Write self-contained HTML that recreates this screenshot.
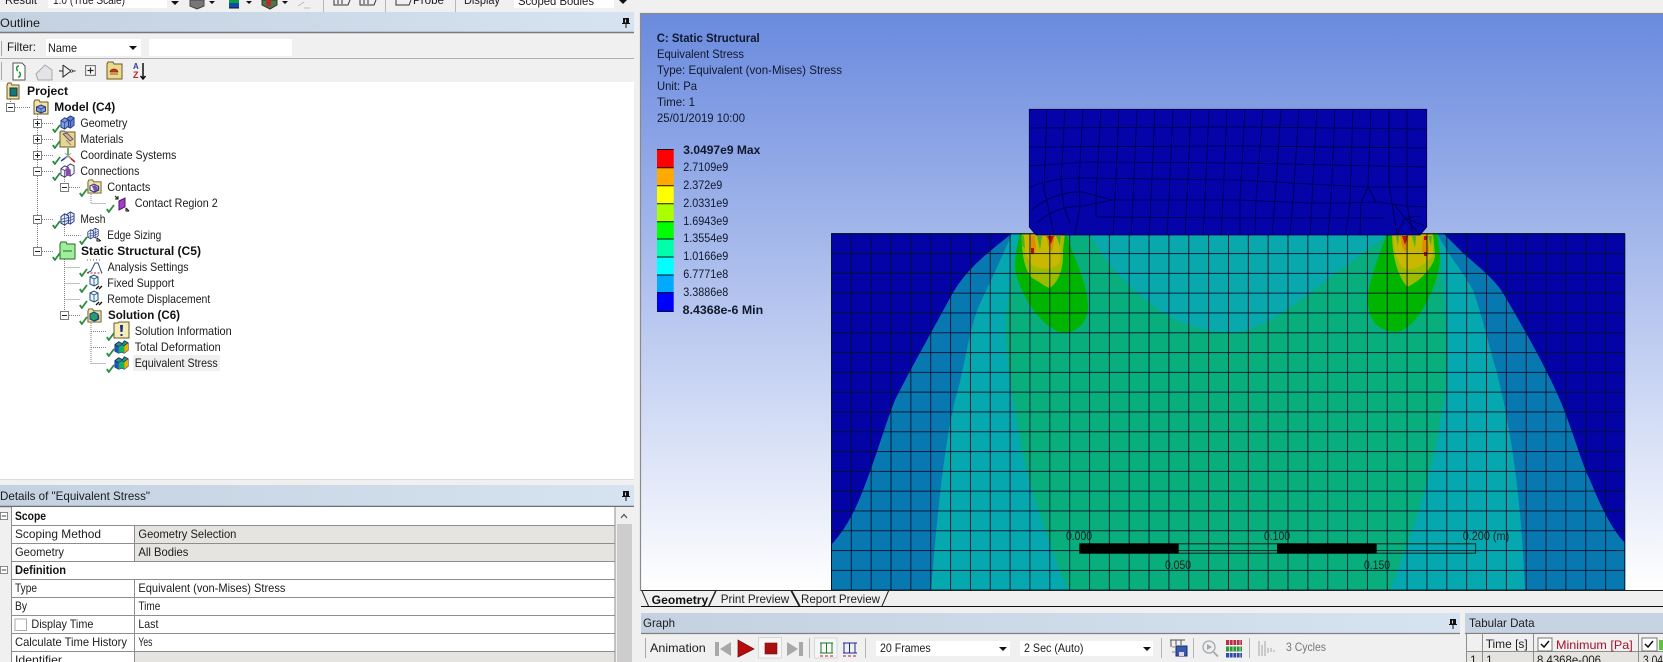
<!DOCTYPE html>
<html lang="en"><head><meta charset="utf-8"><title>Static Structural</title>
<style>
html,body{margin:0;padding:0;width:1663px;height:662px;overflow:hidden;background:#f0f0f0}
svg{display:block}
text{font-family:"Liberation Sans",sans-serif;font-size:12px;fill:#1c1c1c}
.b{font-weight:bold;fill:#111}
.v text,text.v{fill:#10182c}
</style></head><body>
<svg xmlns="http://www.w3.org/2000/svg" width="1663" height="662" viewBox="0 0 1663 662">
<defs>
<linearGradient id="hd" x1="0" x2="1" y1="0" y2="0"><stop offset="0" stop-color="#c3d1e1"/><stop offset="1" stop-color="#d6e3f0"/></linearGradient>
<linearGradient id="bg" x1="0" x2="0" y1="0" y2="1"><stop offset="0" stop-color="#6a8ade"/><stop offset="1" stop-color="#ffffff"/></linearGradient>
<clipPath id="low"><rect x="831" y="233.3" width="794" height="356.7"/></clipPath>
<pattern id="grid" patternUnits="userSpaceOnUse" x="831" y="233.3" width="19.85" height="19.8"><path d="M.4 0V19.8M0 .4H19.85" stroke="#03102c" stroke-width=".95" fill="none"/></pattern>
<symbol id="cube" viewBox="0 0 16 16"><path d="M1 6l4-3 4 2v7l-4 3-4-2z" fill="#7f9fe4" stroke="#27397e"/><path d="M7 4l4-3 4 2v8l-4 3-2-1V5z" fill="#5f82d8" stroke="#27397e"/><path d="M1 6l4 2 4-3M5 8v7M9 5l2 2 4-4M11 7v7" fill="none" stroke="#27397e" stroke-width=".8"/></symbol>
<symbol id="wire" viewBox="0 0 16 16"><path d="M1 6l4-3 4 2v7l-4 3-4-2z" fill="#f6f6fb" stroke="#3a3a6a"/><path d="M7 4l4-3 4 2v8l-4 3-2-1V5z" fill="#f6f6fb" stroke="#3a3a6a"/><path d="M1 6l4 2 4-3M5 8v7M11 7v7" fill="none" stroke="#3a3a6a" stroke-width=".8"/><path d="M6 6l3-1 2 2v5l-3 2-2-1z" fill="#8a48a8"/></symbol>
<symbol id="mesh" viewBox="0 0 16 16"><path d="M1 6l4-3 4 2v7l-4 3-4-2z" fill="#e4ecf8" stroke="#27397e"/><path d="M7 4l4-3 4 2v8l-4 3-2-1V5z" fill="#e4ecf8" stroke="#27397e"/><path d="M1 9l8-2M1 12l8-2M9 8l6-3M9 11l6-3M5 3v12M11 1v13" fill="none" stroke="#27397e" stroke-width=".7"/></symbol>
<symbol id="folder" viewBox="0 0 16 16"><path d="M1 3l1-2h4l1 2h8v12H1z" fill="#f2e3a2" stroke="#6a5a28"/><path d="M3.500 8l4.500-2 4.500 2v4l-4.500 2-4.500-2z" fill="#7f9fe0" stroke="#27397e"/><path d="M3.500 8l4.500 2 4.500-2M8 10v4" fill="none" stroke="#27397e" stroke-width=".7"/></symbol>
<symbol id="res" viewBox="0 0 16 16"><path d="M1 6l4-3 4 2 2-3 4 2v8l-4 3-3-1-3 1-4-2z" fill="#20a070" stroke="#1c2a70"/><path d="M1 6l4 2v7l-4-2z" fill="#2050c8"/><path d="M11 7l4-3v8l-4 3z" fill="#e8b000"/><path d="M5 8l3-2 3 1v8l-3-1-3 1z" fill="#18b060"/><path d="M1 6l4 2 3-2 3 1 4-3" fill="none" stroke="#1c2a70" stroke-width=".8"/></symbol>
<symbol id="supp" viewBox="0 0 16 16"><path d="M3 3l4-2 4 2v7l-4 2-4-2z" fill="#eef4fa" stroke="#16507e"/><path d="M3 3l4 2 4-2M7 5v7" fill="none" stroke="#16507e" stroke-width=".8"/><path d="M9 15l3-3M12 15l3-3" stroke="#111" stroke-width="1.400"/></symbol>
<symbol id="chk" viewBox="0 0 9 9"><path d="M.8 5l2 3L8 1" fill="none" stroke="#2a8c40" stroke-width="1.800"/></symbol>
<symbol id="plus" viewBox="0 0 9 9"><rect x=".5" y=".5" width="8" height="8" fill="#fff" stroke="#7d7d7d"/><path d="M2 4.500h5M4.500 2v5" stroke="#222"/></symbol>
<symbol id="minus" viewBox="0 0 9 9"><rect x=".5" y=".5" width="8" height="8" fill="#fff" stroke="#7d7d7d"/><path d="M2 4.500h5" stroke="#222"/></symbol>
<symbol id="pin" viewBox="0 0 8 10"><path d="M1.500.5h5v5h-5zM0 5.500h8M4 5.500V10" fill="#111" stroke="#111"/><path d="M3 1.500h1v3H3z" fill="#ddd"/></symbol>
</defs>

<!-- top toolbar -->
<rect width="1663" height="13" fill="#f0f0f0"/>
<rect x="48" y="0" width="119" height="8" fill="#fff"/>
<text x="5" y="4" textLength="32" lengthAdjust="spacingAndGlyphs">Result</text>
<text x="53" y="4" textLength="72" lengthAdjust="spacingAndGlyphs">1.0 (True Scale)</text>
<path d="M171 1h8l-4 4zM209 1h6l-3 3zM246 1h6l-3 3zM282 1h6l-3 3zM619 0h8l-4 4z" fill="#111"/>
<path d="M190 0h14v6l-7 3-7-3z" fill="#777" stroke="#444"/>
<rect x="229" y="0" width="10" height="3" fill="#0aa040"/><rect x="229" y="3" width="10" height="5" fill="#104ab0"/><path d="M229 8h10" stroke="#111"/>
<path d="M262 0h15v5l-7 4-8-4z" fill="#4a7a40" stroke="#333"/><path d="M266 0h5v6h-5z" fill="#b03030"/>
<path d="M298 6l6-4M304 8h6" stroke="#bbb" fill="none"/>
<path d="M323.500 0v12M385.500 0v12M455.500 0v12" stroke="#b8b8b8"/>
<path d="M334 0v5h14l2-5M360 0v5h14l2-5M396 0v5h13l2-5M338 0v4M342 0v4M364 0v4M368 0v4" stroke="#333" fill="none"/>
<text x="413" y="4" textLength="31" lengthAdjust="spacingAndGlyphs">Probe</text>
<text x="464" y="4" textLength="36" lengthAdjust="spacingAndGlyphs">Display</text>
<rect x="514" y="0" width="100" height="8" fill="#fff"/>
<text x="518" y="5" textLength="76" lengthAdjust="spacingAndGlyphs">Scoped Bodies</text>

<!-- Outline panel -->
<rect x="0" y="12" width="634" height="20.500" fill="url(#hd)"/>
<path d="M0 32.500h634" stroke="#787878" stroke-width="1.400"/>
<text x="0" y="27" textLength="40" lengthAdjust="spacingAndGlyphs">Outline</text>
<use href="#pin" x="622" y="18" width="8" height="10"/>
<rect x="46" y="39" width="95" height="17" fill="#fff"/><rect x="149" y="39" width="143" height="17" fill="#fff"/>
<text x="7" y="51" textLength="29" lengthAdjust="spacingAndGlyphs">Filter:</text>
<text x="48" y="52" textLength="29" lengthAdjust="spacingAndGlyphs">Name</text>
<path d="M129 46h8l-4 4z" fill="#111"/>
<path d="M0 58.500h634" stroke="#b0b0b0"/>
<path d="M1.500 41v15M1.500 62v18" stroke="#a8a8a8"/>
<path d="M13 63h9l3 3v14H13z" fill="#fff" stroke="#555"/><path d="M19 66c-3 0-3 4-1 5M18 77c3 0 3-4 1-5" fill="none" stroke="#199a33" stroke-width="1.500"/>
<path d="M36 74l9-9 7 5v10H38z" fill="#e4e4e8" stroke="#a8a8a8"/>
<path d="M59 71h4M63 65v12l8-6-8-6M72.500 71h3" fill="none" stroke="#222"/><circle cx="71.500" cy="71" r="1.200" fill="#fff" stroke="#222" stroke-width=".7"/>
<use href="#plus" x="85" y="65" width="11" height="11"/>
<path d="M107 64l1-2h5l1 2h8v15h-15z" fill="#edd98c" stroke="#6a5a28"/><path d="M110 72a4 3 0 0 1 8 0zM110 74h8" fill="#c03a20" stroke="#7a2c14" stroke-width=".7"/>
<text x="133" y="69" style="font-size:8px;font-weight:bold;fill:#3b3ba0">A</text><text x="133" y="78" style="font-size:9px;font-weight:bold;fill:#c02020">Z</text>
<path d="M143 63v16M140.500 76l2.500 3 2.500-3" fill="none" stroke="#111" stroke-width="1.500"/>
<rect x="0" y="82" width="634" height="397" fill="#fff"/>
<path d="M0 479.500h634" stroke="#dcdcdc"/>

<!-- tree connectors -->
<g fill="none" stroke="#808080" stroke-dasharray="1 1">
<path d="M10.500 97v5M15 107.500h16M37.500 112v143M42 123.500h11M42 139.500h11M42 155.500h11M42 171.500h11M42 219.500h11M42 251.500h11M64.500 177v7M69 187.500h11M64.500 225v10.500h16M64.500 257v58M64.500 267.500h15M64.500 283.500h15M64.500 299.500h15M69 315.500h11M91 192v11.500h15M91 321v42.500h15M91 331.500h15M91 347.500h15"/>
</g>
<use href="#minus" x="6" y="103" width="9" height="9"/>
<use href="#plus" x="33" y="119" width="9" height="9"/><use href="#plus" x="33" y="135" width="9" height="9"/><use href="#plus" x="33" y="151" width="9" height="9"/>
<use href="#minus" x="33" y="167" width="9" height="9"/><use href="#minus" x="33" y="215" width="9" height="9"/><use href="#minus" x="33" y="247" width="9" height="9"/>
<use href="#minus" x="60" y="183" width="9" height="9"/><use href="#minus" x="60" y="311" width="9" height="9"/>

<!-- tree icons -->
<path d="M7 85l1-2h3l1 2h7v14H7z" fill="#f2e3a2" stroke="#6a5a28"/><rect x="10" y="88" width="7" height="8" fill="#167a6e" stroke="#12304a"/>
<use href="#folder" x="33" y="99" width="16" height="16"/>
<use href="#cube" x="60" y="115" width="15" height="15"/>
<path d="M60 132l1-1h3l1 1h10v15H60z" fill="#e8d694" stroke="#6a5a28"/><path d="M63 134l7 7 3-2-6-6z" fill="#c8b4a8" stroke="#6c5a58"/><path d="M66 140l5 5" stroke="#888"/>
<path d="M68 148v8" stroke="#2a9a30" stroke-width="1.500"/><path d="M68 156l-7 5" stroke="#2a3ab0" stroke-width="1.500"/><path d="M68 156l7 6" stroke="#c02020" stroke-width="1.500"/><path d="M65 153l6 6M71 153l-6 6" stroke="#aaa"/>
<use href="#wire" x="60" y="163" width="15" height="15"/>
<use href="#folder" x="87" y="179" width="15" height="15"/><path d="M90 186l4-2 4 2v4l-4 2-4-2z" fill="#f4f4fa" stroke="#27397e"/><path d="M92 186l3-1 2 2v3l-3 1z" fill="#8a48a8"/>
<path d="M119 201l6-3v9l-6 3z" fill="#a63ad0" stroke="#4a1a60"/><path d="M115 196l3 3M118 196v3h-3M126 208l3 3M126 208v3h3" stroke="#111" fill="none"/>
<use href="#mesh" x="60" y="211" width="15" height="15"/>
<use href="#mesh" x="87" y="227" width="12" height="13"/><path d="M97 238l4 3M97 238v3h3" stroke="#111" fill="none"/>
<path d="M60 244l1-2h5l1 2h8v15H60z" fill="#9fee9a" stroke="#2a6a2a"/><path d="M63 251h9" stroke="#2a6a2a"/>
<path d="M87 273l4-2 4-8 3 0 3 8 1 2" fill="none" stroke="#2a4a8a"/><path d="M87 260h15" stroke="#666" stroke-dasharray="1 2"/><path d="M87 273h15" stroke="#c02020" stroke-dasharray="2 1.500"/>
<use href="#supp" x="87" y="274" width="16" height="16"/><use href="#supp" x="87" y="290" width="16" height="16"/>
<use href="#folder" x="87" y="308" width="15" height="15"/><path d="M90 314l4-2 4 2v5l-4 2-4-2z" fill="#20a070" stroke="#27397e"/>
<path d="M114 323h4l1-1h10v16h-15z" fill="#f6eeb4" stroke="#6a5a28"/><path d="M120 325h3l-.5 7h-2zM120.500 334h2v2h-2z" fill="#1a2a90"/>
<use href="#res" x="114" y="339" width="15" height="15"/><use href="#res" x="114" y="355" width="15" height="15"/>
<!-- checks -->
<g>
<use href="#chk" x="52" y="124" width="9" height="9"/><use href="#chk" x="52" y="140" width="9" height="9"/><use href="#chk" x="52" y="156" width="9" height="9"/><use href="#chk" x="52" y="172" width="9" height="9"/>
<use href="#chk" x="79" y="188" width="9" height="9"/><use href="#chk" x="106" y="204" width="9" height="9"/>
<use href="#chk" x="52" y="220" width="9" height="9"/><use href="#chk" x="79" y="236" width="9" height="9"/><use href="#chk" x="52" y="252" width="9" height="9"/>
<use href="#chk" x="79" y="268" width="9" height="9"/><use href="#chk" x="79" y="284" width="9" height="9"/><use href="#chk" x="79" y="300" width="9" height="9"/><use href="#chk" x="79" y="316" width="9" height="9"/>
<use href="#chk" x="106" y="332" width="9" height="9"/><use href="#chk" x="106" y="348" width="9" height="9"/><use href="#chk" x="106" y="364" width="9" height="9"/>
</g>
<rect x="133" y="355" width="87" height="16" fill="#f0f0f0"/>
<!-- tree text -->
<text class="b" x="27" y="95" textLength="41" lengthAdjust="spacingAndGlyphs">Project</text>
<text class="b" x="54.300" y="111" textLength="61" lengthAdjust="spacingAndGlyphs">Model (C4)</text>
<text x="80.400" y="127" textLength="47" lengthAdjust="spacingAndGlyphs">Geometry</text>
<text x="80.400" y="143" textLength="43" lengthAdjust="spacingAndGlyphs">Materials</text>
<text x="80.400" y="159" textLength="96" lengthAdjust="spacingAndGlyphs">Coordinate Systems</text>
<text x="80.400" y="175" textLength="59" lengthAdjust="spacingAndGlyphs">Connections</text>
<text x="107.300" y="191" textLength="43" lengthAdjust="spacingAndGlyphs">Contacts</text>
<text x="134.700" y="207" textLength="83" lengthAdjust="spacingAndGlyphs">Contact Region 2</text>
<text x="80.400" y="223" textLength="25" lengthAdjust="spacingAndGlyphs">Mesh</text>
<text x="107.300" y="239" textLength="54" lengthAdjust="spacingAndGlyphs">Edge Sizing</text>
<text class="b" x="81" y="255" textLength="120" lengthAdjust="spacingAndGlyphs">Static Structural (C5)</text>
<text x="107.600" y="271" textLength="81" lengthAdjust="spacingAndGlyphs">Analysis Settings</text>
<text x="107.300" y="287" textLength="67" lengthAdjust="spacingAndGlyphs">Fixed Support</text>
<text x="107.300" y="303" textLength="103" lengthAdjust="spacingAndGlyphs">Remote Displacement</text>
<text class="b" x="108" y="319" textLength="72" lengthAdjust="spacingAndGlyphs">Solution (C6)</text>
<text x="134.700" y="335" textLength="97" lengthAdjust="spacingAndGlyphs">Solution Information</text>
<text x="134.700" y="351" textLength="86" lengthAdjust="spacingAndGlyphs">Total Deformation</text>
<text x="134.700" y="367" textLength="83" lengthAdjust="spacingAndGlyphs">Equivalent Stress</text>

<!-- Details panel -->
<rect x="0" y="485" width="634" height="21" fill="url(#hd)"/>
<path d="M0 506.500h634" stroke="#6e6e6e" stroke-width="1.400"/>
<text x="0" y="500" textLength="150" lengthAdjust="spacingAndGlyphs">Details of &quot;Equivalent Stress&quot;</text>
<use href="#pin" x="622" y="491" width="8" height="10"/>
<rect x="11.500" y="507" width="603.500" height="155" fill="#fff"/>
<rect x="134" y="525.500" width="481" height="36" fill="#e6e4e0"/>
<rect x="134" y="651.500" width="481" height="11" fill="#e6e4e0"/>
<path d="M11.500 507v155M134.500 525v36M134.500 579v83M615 507v155M11.500 525.500h603.500M11.500 543.500h603.500M11.500 561.500h603.500M11.500 579.500h603.500M11.500 597.500h603.500M11.500 615.500h603.500M11.500 633.500h603.500M11.500 651.500h603.500" stroke="#8e8e8e" fill="none"/>
<use href="#minus" x="0" y="512" width="8" height="8"/><use href="#minus" x="0" y="566" width="8" height="8"/>
<rect x="615.500" y="507" width="18.500" height="155" fill="#f0f0f0"/><rect x="617" y="524" width="15" height="138" fill="#cdcdcd"/>
<path d="M621 518l3-3.500 3 3.500" fill="none" stroke="#555" stroke-width="1.300"/>
<rect x="15" y="619" width="11.500" height="11.500" fill="#fff" stroke="#ababab"/>
<text class="b" x="15" y="520" textLength="31" lengthAdjust="spacingAndGlyphs">Scope</text>
<text x="15" y="538" textLength="86" lengthAdjust="spacingAndGlyphs">Scoping Method</text>
<text x="138.400" y="538" textLength="98" lengthAdjust="spacingAndGlyphs">Geometry Selection</text>
<text x="15" y="556" textLength="49" lengthAdjust="spacingAndGlyphs">Geometry</text>
<text x="138.400" y="556" textLength="50" lengthAdjust="spacingAndGlyphs">All Bodies</text>
<text class="b" x="15" y="574" textLength="51" lengthAdjust="spacingAndGlyphs">Definition</text>
<text x="15" y="592" textLength="22" lengthAdjust="spacingAndGlyphs">Type</text>
<text x="138.400" y="592" textLength="147" lengthAdjust="spacingAndGlyphs">Equivalent (von-Mises) Stress</text>
<text x="15" y="610" textLength="12" lengthAdjust="spacingAndGlyphs">By</text>
<text x="138.400" y="610" textLength="22" lengthAdjust="spacingAndGlyphs">Time</text>
<text x="31.400" y="628" textLength="62" lengthAdjust="spacingAndGlyphs">Display Time</text>
<text x="138.400" y="628" textLength="20" lengthAdjust="spacingAndGlyphs">Last</text>
<text x="15" y="646" textLength="112" lengthAdjust="spacingAndGlyphs">Calculate Time History</text>
<text x="138.400" y="646" textLength="14" lengthAdjust="spacingAndGlyphs">Yes</text>
<text x="15" y="664" textLength="47" lengthAdjust="spacingAndGlyphs">Identifier</text>

<!-- Viewport -->
<rect x="641" y="14" width="1022" height="576.500" fill="url(#bg)"/>
<path d="M640.500 13v578M640 13.500h1023" stroke="#8a8a8a" stroke-width="1.200"/>
<g class="v">
<text class="b" x="656.700" y="42" textLength="103" lengthAdjust="spacingAndGlyphs">C: Static Structural</text>
<text x="657" y="58" textLength="87" lengthAdjust="spacingAndGlyphs">Equivalent Stress</text>
<text x="657" y="74" textLength="185" lengthAdjust="spacingAndGlyphs">Type: Equivalent (von-Mises) Stress</text>
<text x="657" y="90" textLength="40" lengthAdjust="spacingAndGlyphs">Unit: Pa</text>
<text x="657" y="106" textLength="38" lengthAdjust="spacingAndGlyphs">Time: 1</text>
<text x="657" y="122" textLength="88" lengthAdjust="spacingAndGlyphs">25/01/2019 10:00</text>
<text class="b" x="683.300" y="154" textLength="77" lengthAdjust="spacingAndGlyphs">3.0497e9 Max</text>
<text x="683.300" y="171" textLength="45" lengthAdjust="spacingAndGlyphs">2.7109e9</text>
<text x="683.300" y="189" textLength="39" lengthAdjust="spacingAndGlyphs">2.372e9</text>
<text x="683.300" y="207" textLength="45" lengthAdjust="spacingAndGlyphs">2.0331e9</text>
<text x="683.300" y="225" textLength="45" lengthAdjust="spacingAndGlyphs">1.6943e9</text>
<text x="683.300" y="242" textLength="45" lengthAdjust="spacingAndGlyphs">1.3554e9</text>
<text x="683.300" y="260" textLength="45" lengthAdjust="spacingAndGlyphs">1.0166e9</text>
<text x="683.300" y="278" textLength="45" lengthAdjust="spacingAndGlyphs">6.7771e8</text>
<text x="683.300" y="296" textLength="45" lengthAdjust="spacingAndGlyphs">3.3886e8</text>
<text class="b" x="682.700" y="314" textLength="80.500" lengthAdjust="spacingAndGlyphs">8.4368e-6 Min</text>
</g>
<!-- legend bar -->
<rect x="657" y="150" width="16.700" height="18" fill="#ff0000"/><rect x="657" y="168" width="16.700" height="18" fill="#ffaa00"/><rect x="657" y="186" width="16.700" height="18" fill="#ffff00"/><rect x="657" y="204" width="16.700" height="18" fill="#aaff00"/><rect x="657" y="222" width="16.700" height="17" fill="#00ff00"/><rect x="657" y="239" width="16.700" height="18" fill="#00ffaa"/><rect x="657" y="257" width="16.700" height="18" fill="#00ffff"/><rect x="657" y="275" width="16.700" height="17.500" fill="#00aaff"/><rect x="657" y="292.500" width="16.700" height="19.500" fill="#0000ff"/>
<path d="M657 149.500h16.700M657 167.700h16.700M657 185.700h16.700M657 203.700h16.700M657 221.700h16.700M657 239h16.700M657 257h16.700M657 275h16.700M657 292.500h16.700M657 311.500h16.700" stroke="#10101c" stroke-width="1"/>

<!-- lower block contours -->
<g clip-path="url(#low)">
<rect x="831" y="233" width="794" height="357" fill="#08ae7c"/>
<path d="M831 233H1020C1015 262 1005 300 1006 333C1007 370 1012 395 1017 420C1023 470 1045 535 1068 590H831Z" fill="#05a8ae"/>
<path d="M831 233H1012L1010 238C1003 255 990 282 978 308C968 335 965 365 957 393C948 425 940 480 931 590H831Z" fill="#0878b0"/>
<path d="M831 233H1012L1010 235C985 255 965 270 950 298C930 335 910 370 895 400C885 425 875 460 865 485C855 512 845 530 831 545Z" fill="#0303a6"/>
<path d="M1625 233H1438C1443 270 1447 320 1447 367C1447 390 1442 415 1440 423C1432 475 1410 540 1390 590H1625Z" fill="#05a8ae"/>
<path d="M1625 233H1437C1445 250 1465 275 1473 290C1482 315 1490 350 1497 373C1505 405 1520 470 1525 590H1625Z" fill="#0878b0"/>
<path d="M1625 233H1443L1463 253C1480 268 1495 280 1503 293C1520 322 1545 365 1560 400C1572 428 1582 465 1590 480C1600 505 1612 530 1625 543Z" fill="#0303a6"/>
<path d="M1090 233C1100 260 1140 300 1170 317C1195 330 1220 334 1240 332C1270 326 1300 300 1350 263L1390 233Z" fill="#08a8ac"/>
<!-- bright green blobs -->
<path d="M1020 233C1016 250 1012 265 1018 280C1025 300 1040 325 1060 332C1075 334 1088 325 1088 305C1087 280 1072 255 1066 233Z" fill="#00b400"/>
<path d="M1387 233C1380 255 1366 285 1368 305C1370 325 1385 334 1400 331C1420 325 1440 280 1440 257L1437 233Z" fill="#00b400"/>
<!-- yellow-green -->
<path d="M1022 233C1021 250 1024 270 1032 278C1040 282 1045 287 1050 288C1058 282 1064 270 1063 250L1065 233Z" fill="#9cbc00"/>
<path d="M1392 233C1392 250 1395 272 1407 287C1420 282 1435 265 1435 255L1433 233Z" fill="#9cbc00"/>
<!-- yellow -->
<path d="M1024 233C1024 245 1025 258 1032 265C1040 270 1052 270 1060 263L1062 233Z" fill="#c8b800"/>
<path d="M1393 233C1393 245 1395 260 1403 268C1412 272 1425 266 1433 255L1432 233Z" fill="#c8b800"/>
<!-- stripes -->
<path d="M1021 236l3 0 1 12-3-2zM1037 236h5l-2 14zM1056 236h5l-1 10z" fill="#52b020"/>
<path d="M1412 236h4l-1 12zM1428 236h4l-1 10zM1396 236h3l-1 10z" fill="#52b020"/>
<path d="M1029 236h6l1 12-3 8-3-8zM1046 236h9l-3 16-3-5z" fill="#e08c00"/>
<path d="M1400 236h9l-2 12-2 4-3-6zM1423 236h5l1 16-3 5-4-6z" fill="#e08c00"/>
<path d="M1031 248l3 0 0 5-3 1zM1047 236h7l-3 8zM1402 236h6l-3 9zM1424 236h3v4h-3zM1424 252h3v4h-3z" fill="#b81500"/>
<rect x="831" y="233.300" width="794" height="357" fill="url(#grid)"/>
</g>
<path d="M831.500 233.500v357M1624.800 233.500v357M831 233.800h203M1420 233.800h205M831 590.200h794" stroke="#03102c" fill="none"/>

<!-- upper block -->
<path d="M1029.300 109.300H1426.700V227L1420 235H1036L1029.300 227Z" fill="#0404a8" stroke="#00004e" stroke-width=".8"/>
<g fill="none" stroke="#00004c" stroke-width=".85">
<path d="M1047 109L1044 190M1065 109L1061 182M1083 109L1079 180M1101 109L1097 180 1096 197M1119 109L1115 200 1113 235M1137 109L1133 200 1131 235M1155 109L1151 200 1149 235M1173 109L1169 200 1167 235M1191 109L1187 200 1185 235M1209 109L1205 200 1203 235M1227 109L1223 200 1221 235M1245 109L1240 200 1240 235M1263 109L1256 200 1255 235M1281 109L1275 200 1272 235M1299 109L1293 200 1290 235M1317 109L1312 200 1310 235M1335 109L1331 200 1328 235M1353 109L1350 200 1346 235M1371 109L1368 187 1361 203 1360 235M1389 109L1389 185 1392 203 1397 235M1407 109L1407 205 1413 235"/>
<path d="M1029 128L1240 127 1427 129M1029 147L1240 146 1427 148M1029 166L1087 162 1240 163 1427 167M1029 188C1040 182 1060 178 1083 178L1240 180 1310 184 1368 187 1427 187M1032 210C1045 198 1065 191 1083 192L1112 200M1037 223C1048 212 1065 206 1083 206L1112 200M1112 200L1240 200 1307 203 1345 203 1376 202 1407 206 1427 207M1097 217L1240 218 1385 218"/>
<path d="M1044 190L1048 206 1054 235M1061 182L1064 207 1070 223M1079 180L1080 206 1075 235M1096 197L1096 216M1368 187L1376 202M1394 204L1405 218 1420 235M1427 227L1405 218 1397 235M1420 216L1405 218"/>
</g>

<!-- scale bar -->
<rect x="1079.300" y="543.300" width="99.400" height="10.400" fill="#000"/><rect x="1277" y="543.300" width="99.700" height="10.400" fill="#000"/>
<path d="M1178.700 543.800H1277M1178.700 553.200H1277M1376.700 543.800H1475.700V553.200H1376.700" fill="none" stroke="#111" stroke-width=".8"/>
<text x="1066" y="540" textLength="26" lengthAdjust="spacingAndGlyphs">0.000</text>
<text x="1165" y="569" textLength="26" lengthAdjust="spacingAndGlyphs">0.050</text>
<text x="1264" y="540" textLength="26" lengthAdjust="spacingAndGlyphs">0.100</text>
<text x="1364" y="569" textLength="26" lengthAdjust="spacingAndGlyphs">0.150</text>
<text x="1462.700" y="540" textLength="46.500" lengthAdjust="spacingAndGlyphs">0.200 (m)</text>

<!-- tabs -->
<rect x="641" y="591" width="1022" height="15" fill="#f0f0f0"/>
<path d="M641 590.500H1663" stroke="#222"/>
<path d="M641 606.500H1663" stroke="#111" stroke-width="1.100"/>
<path d="M642 591l6.500 15M708.500 606l7-15M716 591l-7 15M791 591l8 15M800 606l-8-15M882 606l6.500-15" fill="none" stroke="#222"/>
<text class="b" x="651.700" y="604" textLength="56.500" lengthAdjust="spacingAndGlyphs">Geometry</text>
<text x="720.700" y="603" textLength="68.500" lengthAdjust="spacingAndGlyphs">Print Preview</text>
<text x="801" y="603" textLength="79" lengthAdjust="spacingAndGlyphs">Report Preview</text>

<!-- Graph -->
<rect x="641" y="613" width="819" height="20" fill="url(#hd)"/>
<path d="M641 633.500H1460" stroke="#808080" stroke-width="1.300"/>
<text x="643" y="627" textLength="32" lengthAdjust="spacingAndGlyphs">Graph</text>
<use href="#pin" x="1449" y="619" width="8" height="10"/>
<path d="M645.500 638v20" stroke="#a8a8a8"/>
<text x="650" y="652" textLength="55.700" lengthAdjust="spacingAndGlyphs">Animation</text>
<path d="M715 642h4v14h-4zM731 642v14l-11-7z" fill="#a8a8a8"/>
<path d="M738 640l16 9-16 8z" fill="#b80c0c" stroke="#6a0808" stroke-width=".7"/>
<rect x="758.500" y="637.500" width="23" height="20.500" fill="#f6f6f6" stroke="#d8d8d8"/>
<rect x="765" y="643" width="12" height="11" fill="#a81010" stroke="#7a0c0c" stroke-width=".6"/>
<path d="M787 642v14l11-7zM799 642h4v14h-4z" fill="#a8a8a8"/>
<path d="M809.500 638v20M865.500 638v20" stroke="#b8b8b8"/>
<rect x="814.500" y="638" width="22.500" height="20" fill="#f6f6f6" stroke="#d8d8d8"/>
<path d="M820 643h13M821 643v10M826.500 643v10M832 643v10M820 653h13" fill="none" stroke="#1a7a2a"/><path d="M820 656h3M825 656h3M830 656h3" stroke="#c02020"/>
<path d="M843 643h14M844 643v10M849.500 643v10M855 643v10M843 653h14" fill="none" stroke="#1c2a90"/><path d="M843 656h3M848 656h3M853 656h3" stroke="#c02020"/>
<rect x="876" y="641" width="134" height="15" fill="#fff"/><rect x="1020" y="641" width="133" height="15" fill="#fff"/>
<text x="880" y="652" textLength="50.700" lengthAdjust="spacingAndGlyphs">20 Frames</text>
<text x="1024" y="652" textLength="59.500" lengthAdjust="spacingAndGlyphs">2 Sec (Auto)</text>
<path d="M999 647h8l-4 4zM1143 647h8l-4 4z" fill="#111"/>
<path d="M1161.500 638v20M1193.500 638v20M1249.500 638v20" stroke="#b8b8b8"/>
<path d="M1170 640h15M1171 640v7M1176 640v5M1181 640v5" fill="none" stroke="#555"/><rect x="1176" y="646" width="11" height="10" fill="#3858a8" stroke="#1c2a70"/><rect x="1179" y="652" width="5" height="4" fill="#d8d8e8"/><path d="M1172 647h4M1172 652h4" stroke="#888"/>
<circle cx="1209" cy="647" r="6" fill="#eceff2" stroke="#a8a8a8" stroke-width="1.300"/><path d="M1207 644l5 3-5 3z" fill="#a8a8a8"/><path d="M1213.500 652l4.500 4.500" stroke="#a8a8a8" stroke-width="1.800"/>
<rect x="1226" y="640" width="16" height="5" fill="#b83048"/><rect x="1226" y="646.500" width="16" height="5" fill="#2a9a38"/><rect x="1226" y="653" width="16" height="4.500" fill="#3848a8"/><path d="M1229.500 640v18M1233 640v18M1236.500 640v18M1240 640v18" stroke="#f0f0f0" stroke-width=".7"/>
<path d="M1259 641v15M1262 645v11M1265 641v15M1268 648v5M1271 648v4M1274 650v2" stroke="#b0b0b0" stroke-width="1.200"/>
<text x="1286" y="651" textLength="40" lengthAdjust="spacingAndGlyphs" style="fill:#777">3 Cycles</text>

<!-- Tabular Data -->
<rect x="1465" y="613" width="198" height="20" fill="#c6d3e2"/>
<path d="M1465 633.500H1663" stroke="#808080" stroke-width="1.300"/>
<text x="1469" y="627" textLength="65.500" lengthAdjust="spacingAndGlyphs">Tabular Data</text>
<rect x="1466" y="634" width="197" height="28" fill="#f0f0f0"/>
<rect x="1466" y="652" width="197" height="10" fill="#e6e4e0"/>
<path d="M1466.500 634v28M1482.500 634v28M1533.500 634v28M1638.500 634v28M1466 651.500H1663" stroke="#8e8e8e" fill="none"/>
<text x="1485.700" y="648" textLength="42" lengthAdjust="spacingAndGlyphs">Time [s]</text>
<rect x="1538" y="638" width="14" height="13" fill="#fff" stroke="#777"/><rect x="1642" y="638" width="15" height="13" fill="#fff" stroke="#777"/>
<path d="M1541 644l3 3 5-6M1645 644l3 3 5-6" fill="none" stroke="#111" stroke-width="1.500"/>
<text x="1556" y="649" textLength="76.700" lengthAdjust="spacingAndGlyphs" style="fill:#a8102c">Minimum [Pa]</text>
<rect x="1659" y="640" width="4" height="10" fill="#60c040"/>
<text x="1470" y="664" textLength="5">1</text>
<text x="1486" y="664" textLength="5">1</text>
<text x="1537" y="664" textLength="64" lengthAdjust="spacingAndGlyphs">8.4368e-006</text>
<text x="1643" y="664" textLength="20" lengthAdjust="spacingAndGlyphs">3.04</text>
</svg>
</body></html>
